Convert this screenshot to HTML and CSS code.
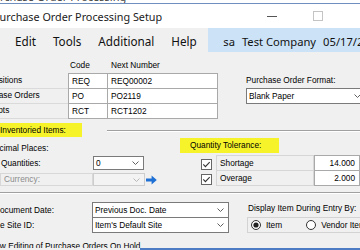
FILE: index.html
```html
<!DOCTYPE html>
<html lang="en">
<head>
    <meta charset="UTF-8">
    <title>Purchase Order Processing Setup</title>
    <link rel="stylesheet" href="styles.css">
</head>
<body>
    <!-- Window chrome -->
    <div class="topstrip"><span>rchase Order Processing</span></div>
    <div class="titlebar">
        <span class="title">Purchase Order Processing Setup</span>
        <span class="winbtn"><svg width="10" height="1" viewBox="0 0 10 1"><rect width="10" height="1" fill="#555"/></svg></span>
        <span class="winbtn"><svg width="10" height="10" viewBox="0 0 10 10"><rect x="0.5" y="0.5" width="9" height="9" fill="none" stroke="#c4c4c4"/></svg></span>
        <span class="winbtn-edge"></span>
    </div>
    <div class="menubar">
        <ul class="menu">
            <li>Edit</li>
            <li>Tools</li>
            <li>Additional</li>
            <li>Help</li>
        </ul>
        <div class="userinfo">
            <span>sa</span>
            <span>Test Company</span>
            <span>05/17/2027</span>
        </div>
    </div>

    <!-- Dialog -->
    <div class="content">
        <div class="numbers">
            <div class="num-table">
                <div class="num-head">
                    <span class="h-label"></span>
                    <span class="h-code">Code</span>
                    <span class="h-next">Next Number</span>
                </div>
                <div class="num-row">
                    <span class="num-label">Requisitions</span>
                    <span class="cell code">REQ</span>
                    <span class="cell next">REQ00002</span>
                </div>
                <div class="num-row">
                    <span class="num-label">Purchase Orders</span>
                    <span class="cell code">PO</span>
                    <span class="cell next">PO2119</span>
                </div>
                <div class="num-row">
                    <span class="num-label">Receipts</span>
                    <span class="cell code">RCT</span>
                    <span class="cell next">RCT1202</span>
                </div>
            </div>
            <div class="format">
                <div class="lbl">Purchase Order Format:</div>
                <div class="select wide">
                    <span class="val">Blank Paper</span>
                    <svg class="chev" width="7" height="4" viewBox="0 0 7 4"><polyline points="0.5,0.5 3.5,3.5 6.5,0.5" fill="none" stroke="#606060"/></svg>
                </div>
            </div>
        </div>

        <div class="group">
            <div class="group-head">
                <span class="marker group-title">Non-Inventoried Items:</span>
                <span class="group-line"></span>
            </div>
            <div class="group-body">
                <div class="decimals">
                    <div class="dec-title">Decimal Places:</div>
                    <div class="field-row qty-row">
                        <span class="lbl">Quantities:</span>
                        <div class="select small">
                            <span class="val">0</span>
                            <svg class="chev" width="7" height="4" viewBox="0 0 7 4"><polyline points="0.5,0.5 3.5,3.5 6.5,0.5" fill="none" stroke="#606060"/></svg>
                        </div>
                    </div>
                    <div class="field-row cur-row">
                        <span class="lbl">Currency:</span>
                        <div class="select small dis">
                            <span class="val"></span>
                            <svg class="chev" width="7" height="4" viewBox="0 0 7 4"><polyline points="0.5,0.5 3.5,3.5 6.5,0.5" fill="none" stroke="#b8b8b8"/></svg>
                        </div>
                        <span class="go"><svg width="11" height="10" viewBox="0 0 11 10"><path d="M0 3.6h5.6V0.6L10.8 5 5.6 9.4V6.4H0z" fill="#1f70d4"/></svg></span>
                    </div>
                </div>
                <div class="tolerance">
                    <div class="marker tol-title">Quantity Tolerance:</div>
                    <div class="tol-rows">
                        <div class="tol-row">
                            <svg class="check" width="11" height="11" viewBox="0 0 11 11"><rect x="0.5" y="0.5" width="10" height="10" fill="#fff" stroke="#666"/><polyline points="2.3,5.4 4.4,7.6 8.7,3.1" fill="none" stroke="#333" stroke-width="1.1"/></svg>
                            <span class="tol-label">Shortage</span>
                            <span class="num-input">14.000</span>
                        </div>
                        <div class="tol-row">
                            <svg class="check" width="11" height="11" viewBox="0 0 11 11"><rect x="0.5" y="0.5" width="10" height="10" fill="#fff" stroke="#666"/><polyline points="2.3,5.4 4.4,7.6 8.7,3.1" fill="none" stroke="#333" stroke-width="1.1"/></svg>
                            <span class="tol-label">Overage</span>
                            <span class="num-input">2.000</span>
                        </div>
                    </div>
                </div>
            </div>
        </div>

        <div class="defaults">
            <div class="def-left">
                <div class="field-row def-row">
                    <span class="lbl cut-d">Document Date:</span>
                    <div class="select date">
                        <span class="val">Previous Doc. Date</span>
                        <svg class="chev" width="7" height="4" viewBox="0 0 7 4"><polyline points="0.5,0.5 3.5,3.5 6.5,0.5" fill="none" stroke="#606060"/></svg>
                    </div>
                </div>
                <div class="field-row def-row">
                    <span class="lbl cut-l">Line Site ID:</span>
                    <div class="select date">
                        <span class="val">Item's Default Site</span>
                        <svg class="chev" width="7" height="4" viewBox="0 0 7 4"><polyline points="0.5,0.5 3.5,3.5 6.5,0.5" fill="none" stroke="#606060"/></svg>
                    </div>
                </div>
            </div>
            <div class="display-by">
                <div class="lbl">Display Item During Entry By:</div>
                <div class="radio-box">
                    <span class="radio">
                        <svg width="10" height="10" viewBox="0 0 10 10"><circle cx="5" cy="5" r="4.5" fill="#fff" stroke="#333"/><circle cx="5" cy="5" r="2.6" fill="#222"/></svg>
                        Item
                    </span>
                    <span class="radio">
                        <svg width="10" height="10" viewBox="0 0 10 10"><circle cx="5" cy="5" r="4.5" fill="#fff" stroke="#333"/></svg>
                        Vendor Item
                    </span>
                </div>
            </div>
        </div>

        <div class="allow-edit">Allow Editing of Purchase Orders On Hold</div>
        <div class="bottom-edge"></div>
    </div>
</body>
</html>
```

FILE: styles.css
```css
/* Reset */
* {
    margin: 0;
    padding: 0;
    box-sizing: border-box;
}

body {
    width: 360px;
    height: 250px;
    overflow: hidden;
    background: #f0f0f0;
    font-family: "Liberation Sans", Arial, sans-serif;
    font-size: 8.3px;
    color: #000;
    white-space: nowrap;
}

/* Window chrome */
.topstrip {
    height: 4px;
    background: #fff;
    border-bottom: 1px solid #6f8fbf;
    overflow: hidden;
}

.topstrip span {
    display: block;
    font-family: "Noto Sans", sans-serif;
    font-size: 11px;
    line-height: 11px;
    margin-top: -9px;
    color: #444;
}

.titlebar {
    display: flex;
    align-items: center;
    height: 24px;
    background: #fff;
    font-family: "Noto Sans", sans-serif;
    overflow: hidden;
}

.title {
    flex: 1;
    margin-left: -7px;
    font-size: 10.8px;
    color: #1b1b1b;
}

.winbtn {
    flex: none;
    width: 46px;
    height: 24px;
    display: flex;
    align-items: center;
    justify-content: center;
}

.winbtn-edge {
    flex: none;
    width: 19px;
}

.menubar {
    display: flex;
    height: 24px;
    background: #f0f0f0;
    font-family: "Noto Sans", sans-serif;
}

.menu {
    display: flex;
    list-style: none;
    padding-left: 6.5px;
}

.menu li {
    padding: 0 8.5px;
    line-height: 26px;
    font-size: 11.7px;
    color: #111;
}

.userinfo {
    flex: 1;
    display: flex;
    align-items: center;
    gap: 7px;
    margin-left: 3px;
    padding: 2px 0 0 15px;
    background: #cce3f7;
    font-size: 11.2px;
    color: #111;
    overflow: hidden;
}

/* Dialog */
.content {
    padding-top: 7px;
}

.lbl {
    line-height: 12px;
}

.numbers {
    display: flex;
}

.num-table {
    margin-left: -23px;
}

.num-head {
    display: flex;
    height: 12px;
    line-height: 12px;
    margin-bottom: 2px;
}

.h-label {
    width: 91px;
}

.h-code {
    width: 39px;
    padding-left: 2px;
}

.h-next {
    padding-left: 4px;
}

.num-row {
    display: flex;
    height: 16px;
    line-height: 14px;
}

.num-row + .num-row {
    margin-top: -1px;
}

.num-label {
    width: 91px;
    border-bottom: 1px solid #dadada;
}

.cell {
    background: #fff;
    border: 1px solid #a9a9a9;
    padding-left: 3px;
}

.code {
    width: 40px;
}

.next {
    width: 111px;
    margin-left: -1px;
}

.format {
    margin: 15px 0 0 28px;
}

.format .lbl {
    margin-bottom: 2px;
}

.select {
    display: flex;
    align-items: center;
    background: #fff;
    border: 1px solid #7a7a7a;
    padding-left: 2px;
}

.select .val {
    flex: 1;
}

.select .chev {
    margin-right: 4px;
}

.wide {
    width: 120px;
    height: 16px;
}

.small {
    width: 51px;
    height: 14px;
}

.date {
    width: 137px;
    height: 16px;
}

.dis {
    width: 52px;
    height: 13px;
    background: #f3f3f3;
    border-color: #cdcdcd;
}

/* Group box */
.group {
    margin-top: 4px;
    padding-bottom: 6px;
    border-bottom: 1px solid #a0a0a0;
    box-shadow: 0 1px 0 #fff;
}

.group-head {
    display: flex;
    align-items: center;
    height: 14px;
}

.marker {
    background: #f6f32a;
}

.group-title {
    width: 100px;
    margin-left: -18px;
    line-height: 14px;
}

.group-line {
    flex: 1;
    margin-left: 25px;
    border-top: 1px solid #a0a0a0;
    box-shadow: 0 1px 0 #fff;
}

.group-body {
    display: flex;
}

.decimals {
    width: 183px;
}

.dec-title {
    margin: 5px 0 0 -11px;
    line-height: 12px;
}

.field-row {
    display: flex;
    align-items: center;
}

.qty-row {
    height: 14px;
    margin-top: 2px;
}

.qty-row .lbl {
    width: 93px;
    padding-left: 1px;
}

.cur-row {
    height: 13px;
    margin-top: 3px;
}

.cur-row .lbl {
    width: 93px;
    height: 13px;
    line-height: 11px;
    padding-left: 3px;
    border: 1px solid #d8d8d8;
    color: #8c8c8c;
}

.go {
    width: 13px;
    height: 13px;
    display: flex;
    align-items: center;
    justify-content: center;
}

.tolerance {
    flex: 1;
}

.tol-title {
    width: 99px;
    height: 15px;
    margin-top: 1px;
    padding-left: 10px;
    line-height: 15px;
}

.tol-rows {
    margin-top: 2px;
}

.tol-row {
    display: flex;
    align-items: center;
    height: 16px;
}

.tol-row + .tol-row {
    margin-top: -1px;
}

.check {
    margin: 2px 4px 0 21px;
}

.tol-label {
    width: 98px;
    height: 16px;
    line-height: 14px;
    padding-left: 3px;
    border: 1px solid #d6d6d6;
}

.num-input {
    width: 46px;
    height: 16px;
    line-height: 14px;
    padding-right: 4px;
    text-align: right;
    background: #fff;
    border: 1px solid #a9a9a9;
}

/* Defaults */
.defaults {
    display: flex;
    margin-top: 9px;
}

.def-row {
    height: 16px;
}

.def-row + .def-row {
    margin-top: -1px;
}

.def-row .lbl {
    width: 92px;
}

.cut-d {
    text-indent: -6px;
}

.cut-l {
    text-indent: -11px;
}

.display-by {
    margin-left: 18px;
}

.display-by .lbl {
    padding-left: 1px;
    margin-bottom: 3px;
}

.radio-box {
    display: flex;
    align-items: center;
    width: 120px;
    height: 16px;
    padding-left: 3px;
    border: 1px solid #d3d3d3;
}

.radio {
    display: flex;
    align-items: center;
    gap: 5px;
}

.radio + .radio {
    margin-left: 24px;
}

.allow-edit {
    height: 8px;
    margin-top: 7px;
    line-height: 12px;
    text-indent: -14px;
    overflow: hidden;
}

.bottom-edge {
    height: 2px;
    background: linear-gradient(to right, transparent 140px, #4d7cc4 140px);
}
```
